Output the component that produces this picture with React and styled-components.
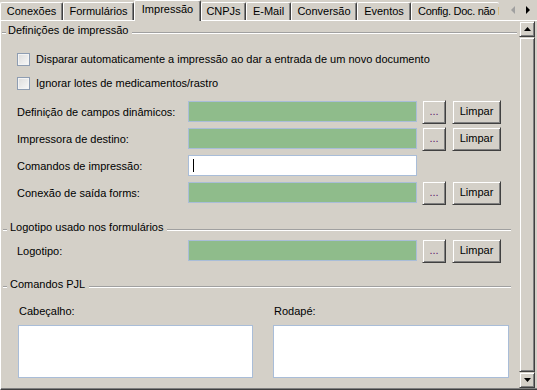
import React from "react";
import styled, { createGlobalStyle } from "styled-components";

const Global = createGlobalStyle`
  html, body { margin: 0; padding: 0; background: #d4d0c8; }
  body {
    font-family: "Liberation Sans", Arial, sans-serif;
    font-size: 11px;
    color: #000;
  }
  * { box-sizing: border-box; }
`;

const Window = styled.div`
  width: 537px;
  height: 390px;
  display: flex;
  flex-direction: column;
  overflow: hidden;
  background: #d4d0c8;
`;

const TabStrip = styled.div`
  height: 20px;
  flex-shrink: 0;
  display: flex;
  align-items: flex-end;
`;

const Tab = styled.div`
  width: ${(p) => p.$w}px;
  flex-shrink: 0;
  height: ${(p) => (p.$active ? 21 : 18)}px;
  margin-bottom: ${(p) => (p.$active ? -1 : 0)}px;
  position: ${(p) => (p.$active ? "relative" : "static")};
  z-index: ${(p) => (p.$active ? 2 : "auto")};
  background: #d4d0c8;
  border-top: 1px solid #fff;
  border-left: 1px solid #fff;
  border-right: ${(p) => (p.$clipped ? "none" : "1px solid #404040")};
  box-shadow: ${(p) => (p.$clipped ? "none" : "inset -1px 0 #808080")};
  border-top-left-radius: 2px;
  border-top-right-radius: 2px;
  padding-top: 2px;
  padding-left: ${(p) => (p.$clipped ? 6 : 0)}px;
  letter-spacing: ${(p) => (p.$clipped ? "-0.3px" : "normal")};
  line-height: 13px;
  text-align: ${(p) => (p.$clipped ? "left" : "center")};
  white-space: nowrap;
  overflow: hidden;
`;

const TabScroller = styled.div`
  flex: 1;
  height: 20px;
  display: flex;
  align-items: center;
  padding-left: 11px;
  gap: 11px;
`;

const Page = styled.div`
  flex: 1;
  min-height: 0;
  display: flex;
  border-top: 1px solid #fff;
  border-left: 1px solid #fff;
  border-bottom: 1px solid #404040;
  box-shadow: inset 0 -1px #808080;
  padding-bottom: 1px;
`;

const Content = styled.div`
  width: 518px;
  display: flex;
  flex-direction: column;
  overflow: hidden;
`;

const ScrollBar = styled.div`
  width: 16px;
  margin-right: 2px;
  display: flex;
  flex-direction: column;
`;

const Raised = styled.div`
  background: #d4d0c8;
  border: 1px solid;
  border-color: #d4d0c8 #404040 #404040 #d4d0c8;
  box-shadow: inset 1px 1px #fff, inset -1px -1px #808080;
`;

const ScrollButton = styled(Raised)`
  height: 16px;
  flex-shrink: 0;
  display: flex;
  align-items: center;
  justify-content: center;
`;

const Thumb = styled(Raised)`
  flex: 1;
`;

const GroupHeader = styled.div`
  height: 13px;
  flex-shrink: 0;
  display: flex;
  align-items: flex-start;
  margin: ${(p) => p.$top}px ${(p) => p.$right}px 0 ${(p) => p.$left}px;
`;

const Etch = styled.div`
  height: 2px;
  margin-top: 8px;
  border-top: 1px solid #a0a0a0;
  border-bottom: 1px solid #fff;
`;

const Dash = styled(Etch)`
  width: 4px;
  flex-shrink: 0;
`;

const Rule = styled(Etch)`
  flex: 1;
`;

const GroupTitle = styled.span`
  line-height: 13px;
  white-space: nowrap;
  padding: 0 4px 0 ${(p) => p.$pad}px;
`;

const CheckRow = styled.label`
  height: 24px;
  flex-shrink: 0;
  display: flex;
  align-items: center;
  gap: 6px;
  padding-left: 16px;
  margin-top: ${(p) => p.$top || 0}px;
`;

const CheckBox = styled.span`
  width: 13px;
  height: 13px;
  border: 1px solid #8e9db2;
  background: linear-gradient(135deg, #dcdcdc 0%, #f0f0f0 70%, #fafafa 100%);
  box-shadow: inset 0 0 0 1px #f4f4f4;
`;

const FieldRow = styled.div`
  height: 27px;
  flex-shrink: 0;
  display: flex;
  align-items: center;
  padding-left: 16px;
  margin-top: ${(p) => p.$top || 0}px;
`;

const FieldLabel = styled.span`
  width: 171px;
  flex-shrink: 0;
  white-space: nowrap;
`;

const Field = styled.div`
  width: 229px;
  height: 21px;
  flex-shrink: 0;
  border: 1px solid #a9bdd8;
  background: ${(p) => (p.$green ? "#8fbc8b" : "#fff")};
  display: flex;
  align-items: center;
`;

const Caret = styled.span`
  width: 1px;
  height: 13px;
  margin-left: 4px;
  background: #000;
`;

const Button = styled(Raised)`
  width: ${(p) => p.$w}px;
  height: 24px;
  flex-shrink: 0;
  margin-left: ${(p) => p.$gap}px;
  display: flex;
  align-items: center;
  justify-content: center;
  color: ${(p) => p.$color || "#000"};
  line-height: 13px;
  padding-bottom: 1px;
`;

const PjlGrid = styled.div`
  display: grid;
  grid-template-columns: 235px 236px;
  column-gap: 20px;
  row-gap: 7px;
  padding-left: 17px;
  margin-top: 14px;
`;

const PjlLabel = styled.span`
  line-height: 13px;
  padding-left: 1px;
`;

const TextArea = styled.div`
  height: 53px;
  background: #fff;
  border: 1px solid #a9bdd8;
`;

const Arrow = ({ dir, color }) => {
  const pts = {
    left: "5,0 5,8 1,4",
    right: "0,0 0,8 4,4",
    up: "3.5,0 7,4 0,4",
    down: "0,0 7,0 3.5,4",
  }[dir];
  const vert = dir === "up" || dir === "down";
  return (
    <svg width={vert ? 7 : 5} height={vert ? 4 : 8} viewBox={vert ? "0 0 7 4" : "0 0 5 8"}>
      <polygon points={pts} fill={color} />
    </svg>
  );
};

const tabs = [
  { t: "Conexões", w: 63 },
  { t: "Formulários", w: 71 },
  { t: "Impressão", w: 67, active: true },
  { t: "CNPJs", w: 45 },
  { t: "E-Mail", w: 45 },
  { t: "Conversão", w: 66 },
  { t: "Eventos", w: 54 },
  { t: "Config. Doc. não I", w: 88, clipped: true },
];

const PickRow = ({ label, top }) => (
  <FieldRow $top={top}>
    <FieldLabel>{label}</FieldLabel>
    <Field $green />
    <Button $w={24} $gap={5} $color="#5a1a6a">...</Button>
    <Button $w={49} $gap={6}>Limpar</Button>
  </FieldRow>
);

export default function App() {
  return (
    <>
      <Global />
      <Window>
        <TabStrip>
          {tabs.map((tb) => (
            <Tab key={tb.t} $w={tb.w} $active={tb.active} $clipped={tb.clipped}>
              {tb.t}
            </Tab>
          ))}
          <TabScroller>
            <Arrow dir="left" color="#a0a0a0" />
            <Arrow dir="right" color="#000" />
          </TabScroller>
        </TabStrip>
        <Page>
          <Content>
            <GroupHeader $top={3} $left={1} $right={2}>
              <Dash />
              <GroupTitle $pad={2}>Definições de impressão</GroupTitle>
              <Rule />
            </GroupHeader>
            <CheckRow $top={10}>
              <CheckBox />
              <span>Disparar automaticamente a impressão ao dar a entrada de um novo documento</span>
            </CheckRow>
            <CheckRow>
              <CheckBox />
              <span>Ignorar lotes de medicamentos/rastro</span>
            </CheckRow>
            <PickRow label="Definição de campos dinâmicos:" top={3} />
            <PickRow label="Impressora de destino:" />
            <FieldRow>
              <FieldLabel>Comandos de impressão:</FieldLabel>
              <Field>
                <Caret />
              </Field>
            </FieldRow>
            <PickRow label="Conexão de saída forms:" />

            <GroupHeader $top={15} $left={2} $right={8}>
              <Dash />
              <GroupTitle $pad={3}>Logotipo usado nos formulários</GroupTitle>
              <Rule />
            </GroupHeader>
            <PickRow label="Logotipo:" top={3} />

            <GroupHeader $top={14} $left={2} $right={8}>
              <Dash />
              <GroupTitle $pad={3}>Comandos PJL</GroupTitle>
              <Rule />
            </GroupHeader>
            <PjlGrid>
              <PjlLabel>Cabeçalho:</PjlLabel>
              <PjlLabel>Rodapé:</PjlLabel>
              <TextArea />
              <TextArea />
            </PjlGrid>
          </Content>
          <ScrollBar>
            <ScrollButton>
              <Arrow dir="up" color="#000" />
            </ScrollButton>
            <Thumb />
            <ScrollButton>
              <Arrow dir="down" color="#000" />
            </ScrollButton>
          </ScrollBar>
        </Page>
      </Window>
    </>
  );
}
